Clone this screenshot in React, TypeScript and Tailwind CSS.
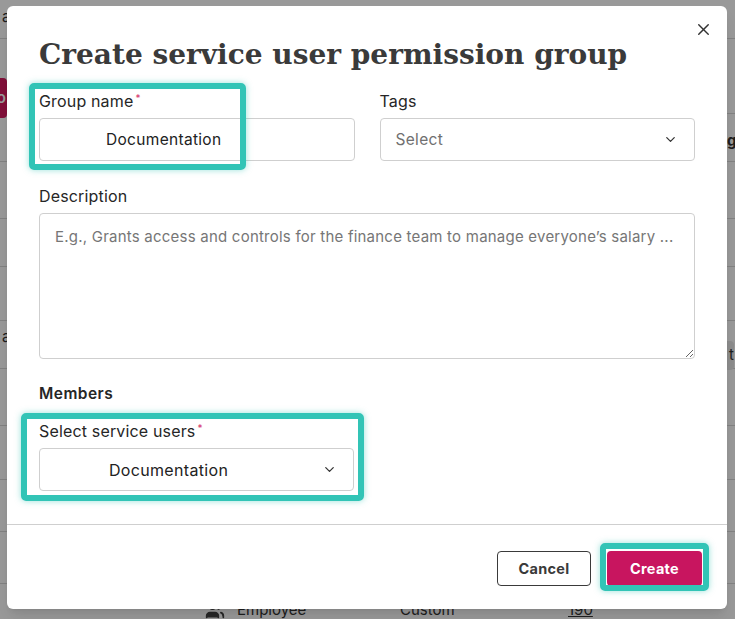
import React from 'react';
import { X, ChevronDown, Users } from 'lucide-react';

const bodyFont = { fontFamily: 'Inter, "Noto Sans", sans-serif' };

const Required = () => <sup className="ml-[2px] text-[10px] text-[#d6336c]">*</sup>;

const rowHeights = [39, 75, 48, 57, 48, 54, 48, 57, 54, 52, 52, 60];

const BackgroundPage: React.FC = () => (
    <div className="flex flex-col bg-white text-[15px] text-[#333]" style={bodyFont}>
        {rowHeights.map((h, i) => (
            <div key={i} className="relative border-b border-[#d9d9d9]" style={{ height: h }}>
                {i === 0 && <span className="absolute left-[2px] top-[6px]">a</span>}
                {i === 1 && (
                    <span className="absolute left-[-30px] top-[39px] flex h-[40px] w-[37px] items-center justify-end rounded bg-[#d81b60] pr-[1px] font-semibold text-white">
                        o
                    </span>
                )}
                {i === 3 && <span className="absolute left-[727px] top-[-32px] font-bold">gs</span>}
                {i === 6 && <span className="absolute left-[2px] top-[5px]">a</span>}
                {i === 7 && (
                    <span className="absolute left-[722px] top-[-28px] h-[29px] rounded bg-[#e9e9e9] pl-[7px] pt-[3px]">
                        t
                    </span>
                )}
                {i === 11 && (
                    <div className="flex items-center pl-[205px] pt-[15px]">
                        <Users size={20} className="text-[#444]" fill="#444" />
                        <span className="ml-[12px] w-[163px]">Employee</span>
                        <span className="w-[168px]">Custom</span>
                        <span className="underline">190</span>
                    </div>
                )}
            </div>
        ))}
    </div>
);

export default function App() {
    return (
        <div className="relative h-[619px] w-[735px] overflow-hidden">
            <BackgroundPage />
            <div className="absolute inset-0 bg-black/40" />

            {/* Modal */}
            <div
                className="absolute left-[7px] top-[6px] flex h-[603px] w-[720px] flex-col rounded-md bg-white text-[#262626] shadow-lg"
                style={bodyFont}
            >
                <button className="absolute right-[14px] top-[14px] text-[#333]">
                    <X size={19} strokeWidth={1.8} />
                </button>

                <div className="flex flex-col px-[32px] pt-[29px]">
                    <h1
                        className="text-[28px] font-bold leading-[40px] text-[#3a3a3a]"
                        style={{ fontFamily: '"DejaVu Serif", serif' }}
                    >
                        Create service user permission group
                    </h1>

                    <div className="mt-[16px] grid grid-cols-2 gap-[25px]">
                        <div className="flex flex-col">
                            <label className="text-[16px] leading-[20px] tracking-[0.01em]">
                                Group name
                                <Required />
                            </label>
                            <div className="mt-[7px] flex h-[43px] items-center rounded border border-[#cfcfcf] pl-[66px] text-[15.5px] tracking-[0.02em] text-[#222]">
                                Documentation
                            </div>
                        </div>
                        <div className="flex flex-col">
                            <label className="text-[16px] leading-[20px] tracking-[0.01em]">Tags</label>
                            <div className="mt-[7px] flex h-[43px] items-center justify-between rounded border border-[#cfcfcf] pl-[15px] pr-[16px] text-[15.5px] tracking-[0.02em] text-[#707070]">
                                <span>Select</span>
                                <ChevronDown size={15} strokeWidth={2} className="text-[#333]" />
                            </div>
                        </div>
                    </div>

                    <label className="mt-[25px] text-[16px] leading-[20px] tracking-[0.01em]">Description</label>
                    <textarea
                        className="mt-[7px] h-[146px] w-full resize-y rounded border border-[#cfcfcf] px-[15px] py-[12px] text-[15px] leading-[22px] tracking-[0.015em] outline-none placeholder:text-[#767676]"
                        placeholder="E.g., Grants access and controls for the finance team to manage everyone’s salary ..."
                    />

                    <h2 className="mt-[25px] text-[15.5px] font-semibold leading-[20px] tracking-[0.03em]">Members</h2>
                    <label className="mt-[17px] text-[16px] leading-[20px] tracking-[0.01em]">
                        Select service users
                        <Required />
                    </label>
                    <div className="mt-[7px] flex h-[43px] w-[315px] items-center justify-between rounded border border-[#cfcfcf] pl-[69px] pr-[16px] text-[16px] tracking-[0.02em] text-[#222]">
                        <span>Documentation</span>
                        <ChevronDown size={15} strokeWidth={2} className="text-[#333]" />
                    </div>
                </div>

                <div className="mt-[33px] border-t border-[#cfcfcf]" />

                <div className="flex justify-end gap-[16px] px-[25px] pt-[26px]">
                    <button className="h-[35px] w-[94px] rounded border border-[#3a3a3a] text-[14.5px] font-bold tracking-[0.02em] text-[#3a3a3a]">
                        Cancel
                    </button>
                    <button className="h-[35px] w-[95px] rounded-sm bg-[#c8155f] text-[14.5px] font-bold tracking-[0.02em] text-white">
                        Create
                    </button>
                </div>

                {/* Highlight annotations */}
                <div className="pointer-events-none absolute left-[22px] top-[77px] h-[87px] w-[217px] rounded-[5px] border-[6px] border-[#32c4b6] shadow-[0_0_6px_rgba(50,196,182,0.5)]" />
                <div className="pointer-events-none absolute left-[14px] top-[407px] h-[88px] w-[343px] rounded-[5px] border-[6px] border-[#32c4b6] shadow-[0_0_6px_rgba(50,196,182,0.5)]" />
                <div className="pointer-events-none absolute left-[593px] top-[537px] h-[48px] w-[109px] rounded-[5px] border-[6px] border-[#32c4b6] shadow-[0_0_6px_rgba(50,196,182,0.5)]" />
            </div>
        </div>
    );
}
